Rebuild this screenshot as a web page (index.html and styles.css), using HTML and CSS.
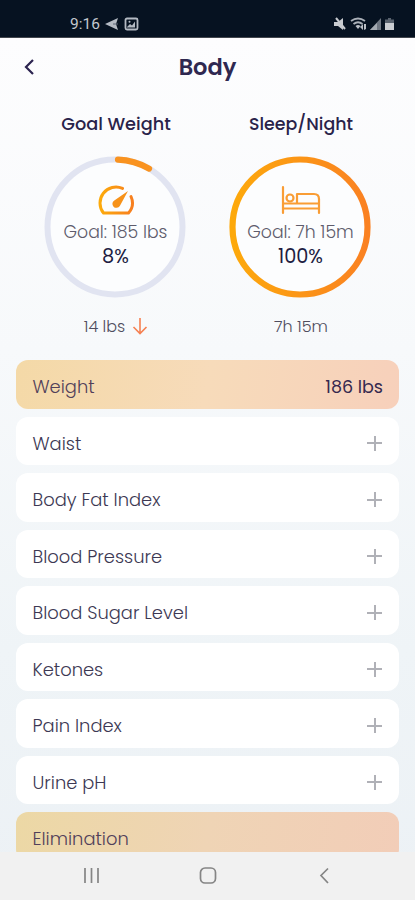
FILE: index.html
```html
<!DOCTYPE html>
<html lang="en">
<head>
<meta charset="utf-8">
<title>Body</title>
<link rel="stylesheet" href="styles.css">
</head>
<body>
<div class="phone">
  <div class="status">
    <span class="time">9:16</span>
    <svg class="status-left" width="36" height="16" viewBox="0 0 36 16"><path d="M0 8 13 2 11 8l2 6z" fill="#b4bac3"/><path d="M8 8h5" stroke="#5a6574"/><rect x="20.500" y="2.500" width="12" height="11" rx="1.500" fill="none" stroke="#b4bac3" stroke-width="1.800"/><path d="m22 11 3-3 2 1.600 3-4v6h-8z" fill="#b4bac3"/><circle cx="24.500" cy="5.700" r="1" fill="#b4bac3"/></svg>
    <svg class="status-right" width="64" height="16" viewBox="0 0 64 16"><path d="M1 6h4l5-4v12l-5-4H1z" fill="#c8cbd0"/><path d="m3 2 9 11" stroke="#c8cbd0" stroke-width="2"/><g fill="none" stroke="#aab0b8" stroke-width="1.800"><path d="M18 5q7-5 14 0M20.500 8q4.500-3.500 9 0"/></g><path d="m22.500 10 2.500 3 2.500-3q-2.500-2-5 0zM27 11l3-3v6zM31 8h2v5l-2 1z" fill="#b9bec5"/><path d="M37 14 48 2v12z" fill="#6f7782"/><path d="m37 14 7-7v7z" fill="#a4aab2"/><path d="M55 2h3v1.500h3V14h-9V3.500h3z" fill="#59626e"/><path d="M52 7h9v7h-9z" fill="#c9ccd1"/></svg>
  </div>
  <header class="header">
    <svg class="back" width="14" height="18" viewBox="0 0 14 18"><path d="M11 2 4 9l7 7" fill="none" stroke="#2c2450" stroke-width="2.200"/></svg>
    <h1>Body</h1>
  </header>
  <section class="goals">
    <article class="goal">
      <h2>Goal Weight</h2>
      <div class="ring">
        <svg class="ring-art" width="142" height="142" viewBox="0 0 142 142"><defs><linearGradient id="gauge" x1="0" x2="1"><stop stop-color="#fcaa0b"/><stop offset="1" stop-color="#f77f1f"/></linearGradient></defs><circle cx="71" cy="71" r="67.500" fill="#fcfdfe" stroke="#e1e4f1" stroke-width="6"/><path d="M74 3.600A67.500 67.500 0 0 1 105 12.600" fill="none" stroke="#f99320" stroke-width="6.200" stroke-linecap="round"/></svg>
        <div class="ring-body">
          <svg class="icon" width="38" height="32" viewBox="0 0 38 32"><path d="M25.500 4.400A16 16 0 0 0 6.500 29H31.500A15.500 15.500 0 0 0 34 12.500" fill="none" stroke="url(#gauge)" stroke-width="3" stroke-linecap="round" stroke-linejoin="round"/><path d="M31 7 17.300 16.400a4 4 0 1 0 5.500 5.500z" fill="#f79219"/></svg>
          <span class="target">Goal: 185 lbs</span>
          <span class="percent">8%</span>
        </div>
      </div>
      <p class="current"><span>14 lbs</span><svg width="16" height="18" viewBox="0 0 16 18"><path d="M8 1v15M1.500 10 8 16.500 14.500 10" fill="none" stroke="#f58052" stroke-width="1.600"/></svg></p>
    </article>
    <article class="goal">
      <h2 class="sleep-title">Sleep/Night</h2>
      <div class="ring">
        <svg class="ring-art" width="142" height="142" viewBox="0 0 142 142"><defs><linearGradient id="orange" x1="0" x2="1"><stop stop-color="#fda90b"/><stop offset="1" stop-color="#fa8122"/></linearGradient></defs><circle cx="71" cy="71" r="67.500" fill="#fcfdfe" stroke="url(#orange)" stroke-width="6.200"/></svg>
        <div class="ring-body">
          <svg class="icon" width="40" height="32" viewBox="0 0 40 32"><g fill="none" stroke="#f99d35" stroke-width="2.200" stroke-linecap="round" stroke-linejoin="round"><path d="M2 3v26M2 19.500h36M2 24.500h36M38 29V15q0-5-5-5H16v9"/><circle cx="9" cy="14" r="3.500"/></g></svg>
          <span class="target">Goal: 7h 15m</span>
          <span class="percent">100%</span>
        </div>
      </div>
      <p class="current"><span>7h 15m</span></p>
    </article>
  </section>
  <main class="list">
    <div class="row filled"><span>Weight</span><b>186 lbs</b></div>
    <div class="row"><span>Waist</span><i class="plus"></i></div>
    <div class="row"><span>Body Fat Index</span><i class="plus"></i></div>
    <div class="row"><span>Blood Pressure</span><i class="plus"></i></div>
    <div class="row"><span>Blood Sugar Level</span><i class="plus"></i></div>
    <div class="row"><span>Ketones</span><i class="plus"></i></div>
    <div class="row"><span>Pain Index</span><i class="plus"></i></div>
    <div class="row"><span>Urine pH</span><i class="plus"></i></div>
    <div class="row filled last"><span>Elimination</span></div>
  </main>
  <nav class="nav">
    <svg width="18" height="18" viewBox="0 0 18 18"><path d="M3 1v15M9.500 1v15M16 1v15" stroke="#858585" stroke-width="1.700"/></svg>
    <svg width="18" height="18" viewBox="0 0 18 18"><rect x="1.500" y="1" width="15" height="15" rx="4.500" fill="none" stroke="#858585" stroke-width="1.700"/></svg>
    <svg width="18" height="18" viewBox="0 0 18 18"><path d="M13 1.500 6 8.500l7 7.500" fill="none" stroke="#858585" stroke-width="1.700"/></svg>
  </nav>
</div>
</body>
</html>
```
FILE: styles.css
```css
* { box-sizing: border-box; }
body { margin: 0; font-family: Poppins, Inter, sans-serif; color: #3c3853; }
h1, h2, p { margin: 0; }
svg { display: block; flex: none; }
span, b, h2 { white-space: nowrap; }
.phone { width: 415px; height: 900px; overflow: hidden; display: flex; flex-direction: column; background: linear-gradient(#fdfdfe 38px, #f7f9fb 350px, #eff4f7 650px, #ecf1f5); }
.status { height: 38px; flex: none; background: #061221; border-bottom: 1px solid #42464d; display: flex; align-items: flex-end; padding: 0 18px 5px 70px; }
.time { font: 400 15.5px/16px Roboto, sans-serif; color: #c3c8cf; width: 35px; }
.status-right { margin-left: auto; }
.header { height: 57px; flex: none; display: grid; grid-template-columns: 24px 1fr 24px; align-items: center; padding: 0 22px; }
.header h1 { text-align: center; font-size: 22.5px; line-height: 28px; font-weight: 600; color: #2f2850; }
.goals { height: 265px; flex: none; display: flex; gap: 43px; padding: 15px 44px 0; }
.goal { width: 142px; display: flex; flex-direction: column; align-items: center; }
.goal h2 { padding-left: 2px; font-size: 17.7px; line-height: 28px; font-weight: 500; color: #29234a; }
.goal .sleep-title { font-size: 17.4px; }
.ring { width: 142px; height: 142px; margin-top: 18px; display: grid; }
.ring-art, .ring-body { grid-area: 1 / 1; }
.ring-body { display: flex; flex-direction: column; align-items: center; padding: 28px 0 0 1px; }
.target { font-size: 17.3px; line-height: 25px; font-weight: 300; color: #5e5c6c; margin-top: 4px; }
.percent { font-size: 19.3px; line-height: 24px; font-weight: 400; color: #211c42; }
.current { height: 28px; margin-top: 14px; padding-left: 2px; display: flex; gap: 7px; align-items: center; font-size: 16px; font-weight: 300; color: #4f4d5e; }
.list { height: 492px; flex: none; overflow: hidden; display: flex; flex-direction: column; gap: 8px; padding: 0 16px; }
.row { height: 48.5px; flex: none; border-radius: 12px; background: #fff; padding: 5px 16px 0 16.5px; display: flex; align-items: center; justify-content: space-between; font-size: 17.9px; font-weight: 300; }
.filled { background: linear-gradient(100deg, #f4d9a7, #f7dbba 50%, #f7d0bb); color: #51405a; }
.last { background: linear-gradient(100deg, #ecd8a5, #efd4b5 50%, #f2cdb8); }
.row b { font-size: 17.5px; font-weight: 400; color: #35294f; }
.plus { width: 15px; height: 15px; margin-right: 1px; background: linear-gradient(#b0b1b7, #b0b1b7) center / 100% 2px no-repeat, linear-gradient(#b0b1b7, #b0b1b7) center / 2px 100% no-repeat; }
.nav { height: 48px; flex: none; background: #f1f1f1; display: flex; justify-content: space-between; align-items: center; padding: 0 82px; }
```
